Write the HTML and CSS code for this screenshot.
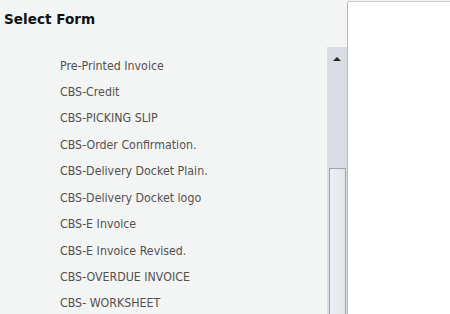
FILE: index.html
```html
<!DOCTYPE html>
<html>
<head>
<link rel="stylesheet" href="styles.css">
</head>
<body>
<div class="page">
  <div class="left">
    <h1 class="title">Select Form</h1>
    <div class="listwrap">
      <ul class="list">
        <li>Pre-Printed Invoice</li>
        <li>CBS-Credit</li>
        <li>CBS-PICKING SLIP</li>
        <li>CBS-Order Confirmation.</li>
        <li>CBS-Delivery Docket Plain.</li>
        <li>CBS-Delivery Docket logo</li>
        <li>CBS-E Invoice</li>
        <li>CBS-E Invoice Revised.</li>
        <li>CBS-OVERDUE INVOICE</li>
        <li>CBS- WORKSHEET</li>
      </ul>
      <div class="scrollbar">
        <div class="arrow"></div>
        <div class="track"></div>
        <div class="thumb"></div>
      </div>
    </div>
  </div>
  <div class="panel"></div>
</div>
</body>
</html>
```
FILE: styles.css
```css
html, body {
  margin: 0;
  padding: 0;
  background: #f3f5f5;
  overflow: hidden;
}
.page {
  display: flex;
  width: 450px;
  height: 314px;
}
.left {
  width: 347px;
  flex-shrink: 0;
  display: flex;
  flex-direction: column;
}
.title {
  flex-shrink: 0;
  margin: 0;
  padding: 11px 0 0 4px;
  height: 37px;
  box-sizing: border-box;
  font-family: "DejaVu Sans", sans-serif;
  font-weight: bold;
  font-size: 13.6px;
  line-height: 16px;
  color: #111;
}
.listwrap {
  flex: 1;
  min-height: 0;
  display: flex;
  overflow: hidden;
}
.list {
  list-style: none;
  margin: 0;
  padding: 15.5px 0 0 60px;
  flex: 1;
}
.list li {
  height: 26.45px;
  line-height: 26px;
  font-family: "DejaVu Sans Condensed", "DejaVu Sans", sans-serif;
  font-size: 12.3px;
  color: #54504d;
}
.scrollbar {
  flex-shrink: 0;
  width: 20px;
  margin-top: 10px;
  background: #d9dde3;
  display: flex;
  flex-direction: column;
  align-items: center;
}
.arrow {
  margin-top: 10px;
  width: 0;
  height: 0;
  border-left: 4px solid transparent;
  border-right: 4px solid transparent;
  border-bottom: 4px solid #222;
}
.track {
  height: 107px;
}
.thumb {
  flex: 1;
  width: 15px;
  border: 1px solid #9ea4ad;
  border-bottom: none;
  background: linear-gradient(to right, #eceef2, #e2e5ea);
}
.panel {
  margin-top: 1px;
  flex: 1;
  background: #fff;
  border-left: 1px solid #b8b8b8;
  border-top: 1px solid #c8c8c8;
  border-top-left-radius: 2px;
}
```
